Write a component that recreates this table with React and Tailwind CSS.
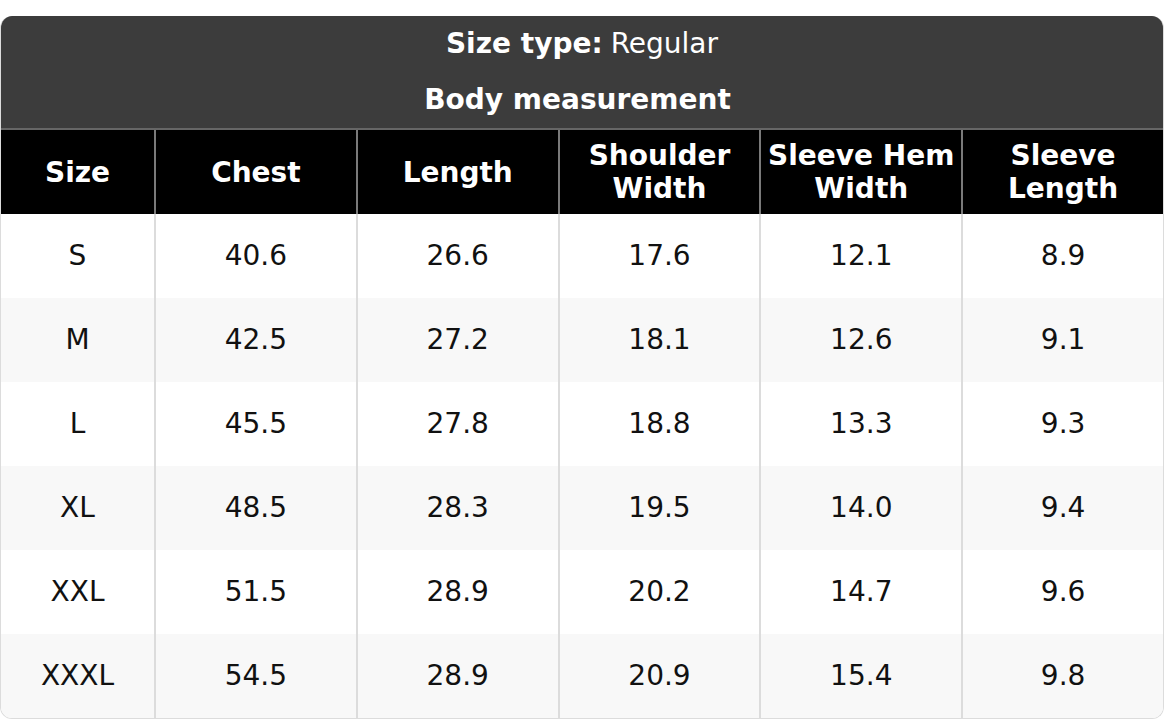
import React from "react"

const columns = ["Size", "Chest", "Length", "Shoulder Width", "Sleeve Hem Width", "Sleeve Length"]

const rows = [
  ["S", "40.6", "26.6", "17.6", "12.1", "8.9"],
  ["M", "42.5", "27.2", "18.1", "12.6", "9.1"],
  ["L", "45.5", "27.8", "18.8", "13.3", "9.3"],
  ["XL", "48.5", "28.3", "19.5", "14.0", "9.4"],
  ["XXL", "51.5", "28.9", "20.2", "14.7", "9.6"],
  ["XXXL", "54.5", "28.9", "20.9", "15.4", "9.8"],
]

export default function App() {
  return (
    <div className="w-[1164px] h-[720px] bg-white pt-4 font-['DejaVu_Sans',sans-serif]">
      <div className="rounded-xl overflow-hidden border-x border-b border-[#dcdcdc]">
        {/* Title block */}
        <div className="bg-[#3c3c3c] text-white text-[28px] border-b-2 border-[#666]">
          <div className="h-14 flex items-center justify-center">
            <span className="font-bold">Size type:</span>
            <span className="ml-2">Regular</span>
          </div>
          <div className="h-14 flex items-center justify-center font-bold pr-[9px]">Body measurement</div>
        </div>

        {/* Table header */}
        <div className="grid grid-cols-[153px_repeat(5,1fr)] bg-black text-white font-bold text-[28px] leading-[33px]">
          {columns.map((c, i) => (
            <div
              key={c}
              className={
                "h-[84px] flex items-center justify-center text-center px-1 " +
                (i > 0 ? "border-l-2 border-[#7a7a7a]" : "")
              }
            >
              {c === "Shoulder Width" ? (
                <span>Shoulder<br />Width</span>
              ) : c === "Sleeve Hem Width" ? (
                <span>Sleeve Hem<br />Width</span>
              ) : c === "Sleeve Length" ? (
                <span>Sleeve<br />Length</span>
              ) : (
                c
              )}
            </div>
          ))}
        </div>

        {/* Rows */}
        {rows.map((r, ri) => (
          <div
            key={r[0]}
            className={
              "grid grid-cols-[153px_repeat(5,1fr)] text-[28px] text-[#111] " +
              (ri % 2 === 1 ? "bg-[#f8f8f8]" : "bg-white")
            }
          >
            {r.map((v, i) => (
              <div
                key={i}
                className={
                  "h-[84px] flex items-center justify-center " +
                  (i > 0 ? "border-l-2 border-[#dcdcdc]" : "")
                }
              >
                {v}
              </div>
            ))}
          </div>
        ))}
      </div>
    </div>
  )
}
